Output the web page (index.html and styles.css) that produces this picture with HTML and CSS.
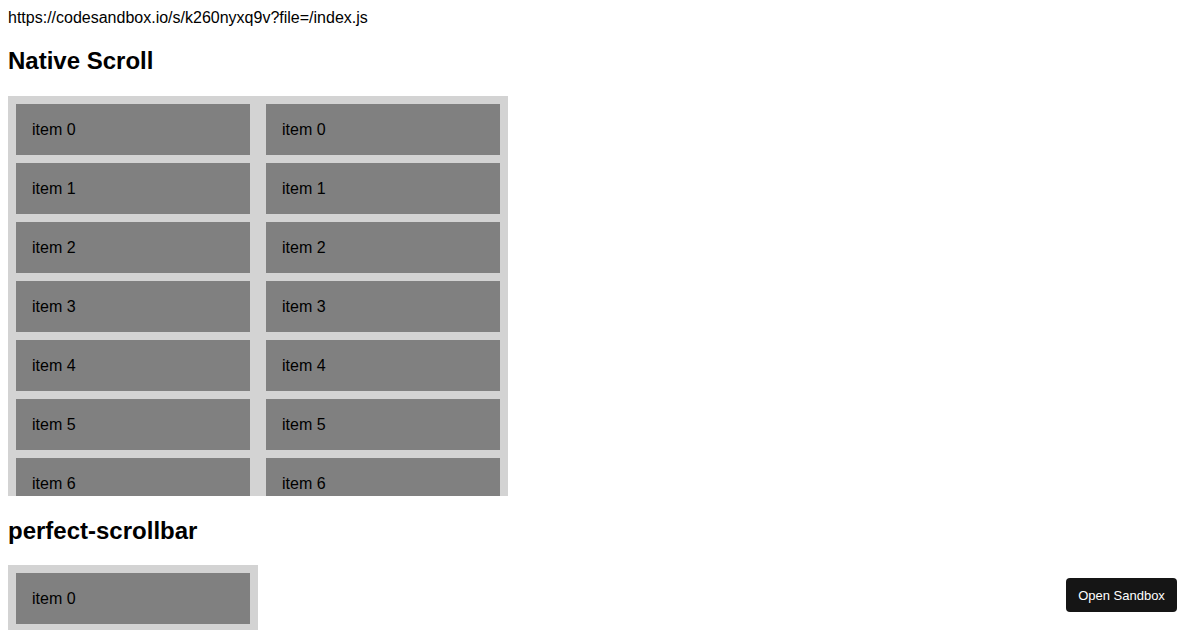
FILE: index.html
```html
<!DOCTYPE html>
<html>
<head>
<meta charset="utf-8">
<link rel="stylesheet" href="styles.css">
</head>
<body>
<div class="url">https://codesandbox.io/s/k260nyxq9v?file=/index.js</div>
<h2 class="title">Native Scroll</h2>
<div class="box box-wide">
  <div class="item">item 0</div><div class="item">item 0</div>
  <div class="item">item 1</div><div class="item">item 1</div>
  <div class="item">item 2</div><div class="item">item 2</div>
  <div class="item">item 3</div><div class="item">item 3</div>
  <div class="item">item 4</div><div class="item">item 4</div>
  <div class="item">item 5</div><div class="item">item 5</div>
  <div class="item">item 6</div><div class="item">item 6</div>
</div>
<h2 class="title title-second">perfect-scrollbar</h2>
<div class="box box-narrow">
  <div class="item">item 0</div>
</div>
<a class="open-btn">Open Sandbox</a>
</body>
</html>
```

FILE: styles.css
```css
html, body {
  overflow: hidden;
}
body {
  margin: 8px;
  font-family: "Liberation Sans", Arial, sans-serif;
  font-size: 16px;
  color: #000;
  background: #fff;
}
.url {
  line-height: 20px;
  height: 20px;
}
.title {
  font-size: 24px;
  font-weight: bold;
  line-height: 28px;
  margin: 19px 0 21px;
}
.title-second {
  margin: 21px 0 20px;
}
.box {
  background: #d3d3d3;
  padding: 8px;
  display: grid;
  grid-auto-rows: 51px;
  row-gap: 8px;
  column-gap: 16px;
  overflow: hidden;
  box-sizing: border-box;
}
.box-wide {
  width: 500px;
  height: 400px;
  grid-template-columns: 234px 234px;
}
.box-narrow {
  width: 250px;
  height: 70px;
  grid-template-columns: 234px;
}
.item {
  background: #808080;
  color: #000;
  padding: 16px;
  line-height: 19px;
  height: 51px;
  box-sizing: border-box;
}
.open-btn {
  position: fixed;
  right: 23px;
  bottom: 18px;
  width: 111px;
  height: 34px;
  box-sizing: border-box;
  background: #151515;
  color: #fff;
  border-radius: 4px;
  font-size: 13px;
  display: flex;
  align-items: center;
  justify-content: center;
}
```
